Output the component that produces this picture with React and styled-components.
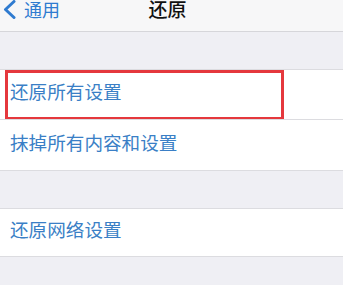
import React from "react";
import styled, { createGlobalStyle } from "styled-components";

const Global = createGlobalStyle`
  html, body { margin: 0; padding: 0; background: #efeff4; }
  body { font-family: "Noto Sans CJK SC", "Noto Sans", sans-serif; }
  * { box-sizing: border-box; }
`;

const Screen = styled.div`
  width: 343px;
  height: 285px;
  background: #efeff4;
  overflow: hidden;
  display: flex;
  flex-direction: column;
`;

const NavBar = styled.div`
  height: 32px;
  flex: none;
  background: #f7f7f8;
  border-bottom: 1px solid #d6d6da;
  display: grid;
  grid-template-columns: 1fr auto 1fr;
  align-items: start;
`;

const BackButton = styled.div`
  display: flex;
  align-items: center;
  gap: 8px;
  padding-left: 2px;
  color: #2f7bd0;
  font-size: 18px;
  line-height: 19px;
  height: 19px;
`;

const Title = styled.div`
  color: #111;
  font-size: 19px;
  font-weight: 500;
  line-height: 18px;
  margin-right: 8px;
`;

const Gap = styled.div`
  height: ${(p) => p.$h}px;
  flex: none;
`;

const Group = styled.div`
  background: #fff;
  border-top: 1px solid #dcdce0;
  border-bottom: 1px solid #dcdce0;
  flex: none;
`;

const Row = styled.div`
  position: relative;
  height: ${(p) => p.$h || 48}px;
  display: flex;
  align-items: center;
  padding-left: 10px;
  padding-bottom: 8px;
  color: #3a7fc6;
  font-size: 18.6px;
  & + & {
    border-top: 1px solid #dcdce0;
  }
`;

const Highlight = styled.div`
  position: absolute;
  left: 5px;
  top: 0;
  width: 279px;
  height: 50px;
  border: 3px solid #e5383d;
  pointer-events: none;
`;

const Chevron = () => (
  <svg width="14" height="19" viewBox="0 0 14 19" fill="none">
    <path d="M12 1.5 L3.5 9.5 L12 17.5" stroke="#2f7bd0" strokeWidth="3" strokeLinecap="round" strokeLinejoin="round" />
  </svg>
);

export default function App() {
  return (
    <>
      <Global />
      <Screen>
        <NavBar>
          <BackButton>
            <Chevron />
            <span>通用</span>
          </BackButton>
          <Title>还原</Title>
          <div />
        </NavBar>
        <Gap $h={37} />
        <Group>
          <Row $h={49}>
            还原所有设置
            <Highlight />
          </Row>
          <Row $h={51}>抹掉所有内容和设置</Row>
        </Group>
        <Gap $h={37} />
        <Group>
          <Row $h={47}>还原网络设置</Row>
        </Group>
      </Screen>
    </>
  );
}
